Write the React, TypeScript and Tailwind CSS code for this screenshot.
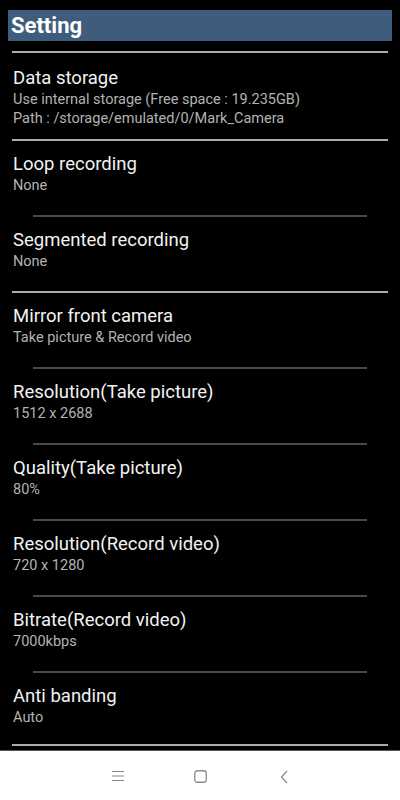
const items = [
  { title: "Loop recording", sub: "None", line: "thin" },
  { title: "Segmented recording", sub: "None", line: "thick" },
  { title: "Mirror front camera", sub: "Take picture & Record video", line: "thin" },
  { title: "Resolution(Take picture)", sub: "1512 x 2688", line: "thin" },
  { title: "Quality(Take picture)", sub: "80%", line: "thin" },
  { title: "Resolution(Record video)", sub: "720 x 1280", line: "thin" },
  { title: "Bitrate(Record video)", sub: "7000kbps", line: "thin" },
  { title: "Anti banding", sub: "Auto", line: "thick", last: true },
];

function Thick() {
  return <div className="mx-[12px] h-[2px] bg-[#ababab]" />;
}

function Thin() {
  return <div className="mx-[33px] h-[2px] bg-[#4a4a4a]" />;
}

export default function App() {
  return (
    <div
      className="flex h-[800px] w-[400px] flex-col overflow-hidden bg-black"
      style={{ fontFamily: "Roboto, 'Noto Sans', sans-serif" }}
    >
      <div className="flex-1 overflow-hidden">
        <div className="mx-[8px] mt-[10px] flex h-[31px] items-center bg-[#3e5d7c] pl-[3px]">
          <span className="text-[22px] font-bold leading-none text-white">Setting</span>
        </div>
        <div className="mt-[10px]">
          <Thick />
        </div>
        <div className="px-[13px] pt-[14px] pb-[11px]">
          <div className="text-[18.5px] leading-[23px] text-[#f2f2f2]">Data storage</div>
          <div className="text-[14.5px] leading-[19px] text-[#b3b3b3]">
            Use internal storage (Free space : 19.235GB)
          </div>
          <div className="text-[14.5px] leading-[19px] text-[#b3b3b3]">
            Path : /storage/emulated/0/Mark_Camera
          </div>
        </div>
        <Thick />
        {items.map((it) => (
          <div key={it.title}>
            <div className={`px-[13px] pt-[12px] ${it.last ? "pb-[17px]" : "pb-[20px]"}`}>
              <div className="text-[18.5px] leading-[23px] text-[#f2f2f2]">{it.title}</div>
              <div className="text-[14.5px] leading-[19px] text-[#b3b3b3]">{it.sub}</div>
            </div>
            {it.line === "thick" ? <Thick /> : <Thin />}
          </div>
        ))}
        <div className="mt-[4px] h-[1px] bg-[#555555]" />
      </div>
      <div className="relative h-[49px] shrink-0 bg-white">
        <svg width="12" height="12" viewBox="0 0 12 12" className="absolute left-[112px] top-[19px]">
          <path d="M0 1.5h12M0 6h12M0 10.5h12" stroke="#8a8a8a" strokeWidth="1.2" fill="none" />
        </svg>
        <svg width="13" height="13" viewBox="0 0 13 13" className="absolute left-[194px] top-[19px]">
          <rect x="0.75" y="0.75" width="11.5" height="11.5" rx="2.5" stroke="#8a8a8a" strokeWidth="1.3" fill="none" />
        </svg>
        <svg width="8" height="14" viewBox="0 0 8 14" className="absolute left-[280px] top-[19px]">
          <path d="M7 1L1.5 7L7 13" stroke="#8a8a8a" strokeWidth="1.2" fill="none" />
        </svg>
      </div>
    </div>
  );
}
